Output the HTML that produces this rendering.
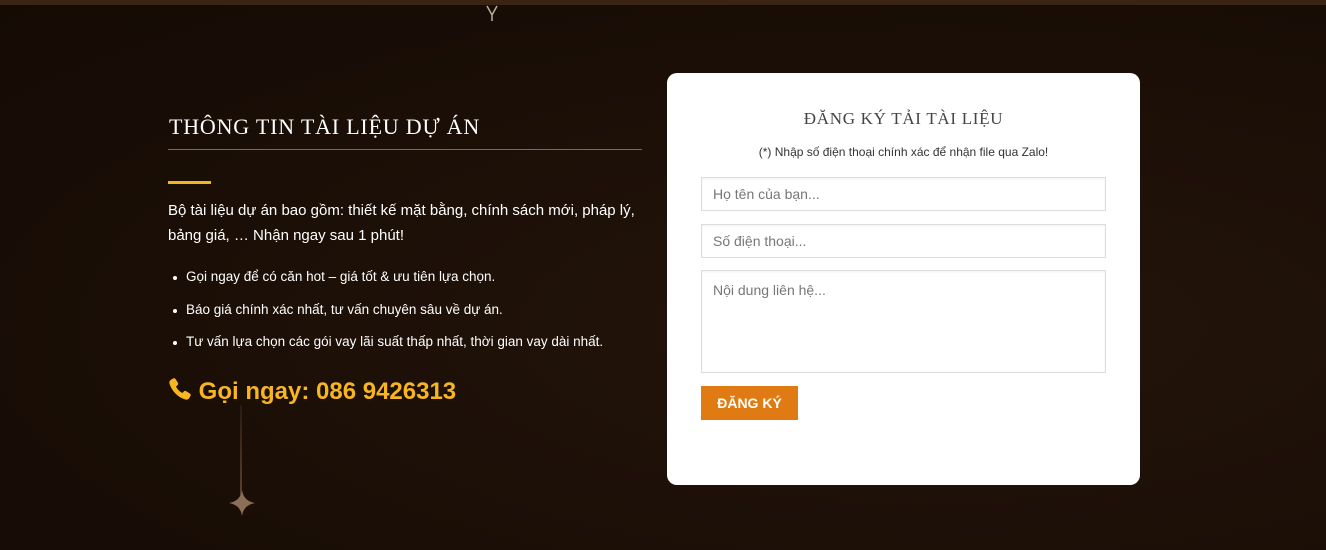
<!DOCTYPE html>
<html><head><meta charset="utf-8"><style>
*{margin:0;padding:0;box-sizing:border-box}
body{width:1326px;height:550px;overflow:hidden;background:#1b0f07;font-family:"Liberation Sans",sans-serif;position:relative}
.bg{position:absolute;inset:0;background:radial-gradient(ellipse at 70% 60%,#24150b 0%,#1a0e06 60%,#150b05 100%)}
.topline{position:absolute;left:0;top:0;width:1326px;height:5px;background:#3a2414}
.abs{position:absolute}
h2{position:absolute;left:169px;top:114px;font-family:"Liberation Serif",serif;font-weight:normal;color:#fff;font-size:22px;letter-spacing:0.8px}
.hr{position:absolute;left:168px;top:149px;width:474px;height:1px;background:#7a6a5c}
.gold{position:absolute;left:168px;top:181px;width:43px;height:3px;background:#f2b51e}
.p{position:absolute;left:168px;top:198px;width:480px;color:#fff;font-size:15px;line-height:25px}
ul{position:absolute;left:186px;top:267px;color:#fff;font-size:13.5px;list-style:none}
li{height:32.5px;line-height:20px;position:relative}
li:before{content:"";position:absolute;left:-13px;top:9px;width:4px;height:4px;border-radius:50%;background:#fff}
.call{position:absolute;left:168px;top:377px;color:#f7b520;font-size:24px;font-weight:bold}
.card{position:absolute;left:667px;top:73px;width:473px;height:412px;background:#fff;border-radius:10px}
.ct{position:absolute;left:0;width:473px;text-align:center}
.in{position:absolute;left:34px;width:405px;border:1px solid #ddd;box-shadow:inset 0 1px 2px rgba(0,0,0,.06);color:#777;font-size:14px;padding-left:11px}
.btn{position:absolute;left:34px;top:313px;width:97px;height:34px;background:#e07b13;color:#fff;font-weight:bold;font-size:14px;text-align:center;line-height:34px}
</style></head><body>
<div class="bg"></div>
<div class="topline"></div>
<svg class="abs" style="left:484px;top:3px" width="16" height="20"><path d="M3 3 L8 12 L13 3 M8 12 L8 18" stroke="#bfae9a" stroke-width="1.5" fill="none"/></svg>
<div class="abs" style="left:240px;top:405px;width:2px;height:90px;background:linear-gradient(#2a1a0e,#5a4030)"></div>
<svg class="abs" style="left:229px;top:490px" width="26" height="26"><path d="M13 0 Q14.5 11 26 13 Q14.5 15 13 26 Q11.5 15 0 13 Q11.5 11 13 0Z" fill="#8a6e55"/></svg>
<h2>THÔNG TIN TÀI LIỆU DỰ ÁN</h2>
<div class="hr"></div>
<div class="gold"></div>
<div class="p">Bộ tài liệu dự án bao gồm: thiết kế mặt bằng, chính sách mới, pháp lý, bảng giá, … Nhận ngay sau 1 phút!</div>
<ul>
<li>Gọi ngay để có căn hot – giá tốt &amp; ưu tiên lựa chọn.</li>
<li>Báo giá chính xác nhất, tư vấn chuyên sâu về dự án.</li>
<li>Tư vấn lựa chọn các gói vay lãi suất thấp nhất, thời gian vay dài nhất.</li>
</ul>
<div class="call"><svg width="24" height="24" viewBox="0 0 24 24" style="vertical-align:-2px"><path d="M5 1.5c1-.6 2-.3 2.6.6l2.3 3.6c.5.9.3 2-.5 2.6L8 9.5c1.3 2.8 3.5 5.1 6.4 6.5l1.3-1.4c.7-.8 1.8-.9 2.6-.4l3.5 2.3c.9.6 1.2 1.7.6 2.6l-1.2 2c-.8 1.3-2.4 1.9-3.8 1.4C9.6 20 4 14.4 1.5 6.6 1 5.1 1.6 3.5 3 2.7z" fill="#f7b520"/></svg> Gọi ngay: 086 9426313</div>
<div class="card">
<div class="ct" style="top:36px;font-family:'Liberation Serif',serif;font-size:17px;color:#444;letter-spacing:0.7px">ĐĂNG KÝ TẢI TÀI LIỆU</div>
<div class="ct" style="top:72px;font-size:12px;color:#333">(*) Nhập số điện thoại chính xác để nhận file qua Zalo!</div>
<div class="in" style="top:104px;height:34px;line-height:32px">Họ tên của bạn...</div>
<div class="in" style="top:151px;height:34px;line-height:32px">Số điện thoại...</div>
<div class="in" style="top:197px;height:103px;padding-top:10px;line-height:18px">Nội dung liên hệ...</div>
<div class="btn">ĐĂNG KÝ</div>
</div>
</body></html>
